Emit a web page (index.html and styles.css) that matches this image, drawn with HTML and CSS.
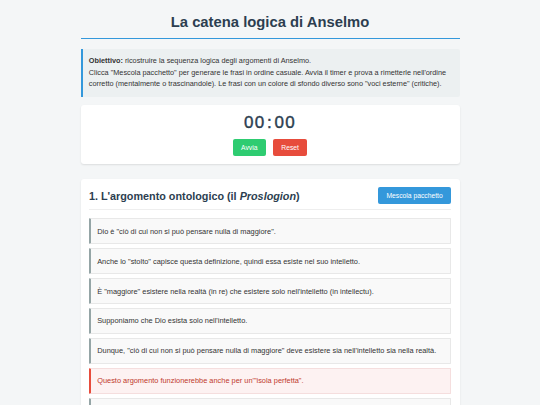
FILE: index.html
```html
<!DOCTYPE html>
<html lang="it">
<head>
<meta charset="utf-8">
<title>La catena logica di Anselmo</title>
<link rel="stylesheet" href="styles.css">
</head>
<body>
<main class="wrap">
  <h1 class="title">La catena logica di Anselmo</h1>

  <section class="intro">
    <p><strong>Obiettivo:</strong> ricostruire la sequenza logica degli argomenti di Anselmo.</p>
    <p>Clicca "Mescola pacchetto" per generare le frasi in ordine casuale. Avvia il timer e prova a rimetterle nell'ordine corretto (mentalmente o trascinandole). Le frasi con un colore di sfondo diverso sono "voci esterne" (critiche).</p>
  </section>

  <section class="card timer">
    <div class="clock">00<span class="colon">:</span>00</div>
    <div class="timer-actions">
      <button class="btn btn-green" type="button">Avvia</button>
      <button class="btn btn-red" type="button">Reset</button>
    </div>
  </section>

  <section class="card deck">
    <header class="deck-head">
      <h2>1. L'argomento ontologico (il <em>Proslogion</em>)</h2>
      <button class="btn btn-blue" type="button">Mescola pacchetto</button>
    </header>
    <ul class="steps">
      <li class="step">Dio è "ciò di cui non si può pensare nulla di maggiore".</li>
      <li class="step">Anche lo "stolto" capisce questa definizione, quindi essa esiste nel suo intelletto.</li>
      <li class="step">È "maggiore" esistere nella realtà (in re) che esistere solo nell'intelletto (in intellectu).</li>
      <li class="step">Supponiamo che Dio esista solo nell'intelletto.</li>
      <li class="step">Dunque, "ciò di cui non si può pensare nulla di maggiore" deve esistere sia nell'intelletto sia nella realtà.</li>
      <li class="step step-critic">Questo argomento funzionerebbe anche per un'"isola perfetta".</li>
      <li class="step">Ma allora potremmo pensare qualcosa di maggiore: un essere che esiste anche nella realtà.</li>
    </ul>
  </section>
</main>
</body>
</html>
```

FILE: styles.css
```css
* {
  box-sizing: border-box;
}

html, body {
  margin: 0;
  padding: 0;
}

body {
  background: #f4f6f7;
  color: #333;
  font-family: "Liberation Sans", Arial, sans-serif;
  font-size: 7.3px;
}

.wrap {
  width: 379px;
  margin: 0 auto;
  padding-top: 8px;
}

.title {
  margin: 5.6px 0 10px;
  padding-bottom: 7.5px;
  border-bottom: 1px solid #3498db;
  color: #2c3e50;
  font-size: 14.8px;
  font-weight: bold;
  text-align: center;
  line-height: 16.5px;
}

.intro {
  background: #ecf0f1;
  border-left: 2px solid #3498db;
  border-radius: 0 2px 2px 0;
  padding: 6.3px 6.3px;
  line-height: 11.8px;
  color: #333;
}

.intro p {
  margin: 0;
}

.card {
  background: #fff;
  border-radius: 3px;
  box-shadow: 0 1px 2px rgba(0, 0, 0, 0.1);
}

.timer {
  margin-top: 8px;
  padding: 8.4px;
  text-align: center;
}

.clock {
  color: #2c3e50;
  font-size: 17px;
  font-weight: normal;
  -webkit-text-stroke: 0.4px #2c3e50;
  letter-spacing: 1.3px;
  line-height: 19.5px;
  margin-bottom: 7px;
}

.clock .colon {
  padding: 0 1.5px;
}

.timer-actions {
  display: flex;
  justify-content: center;
  gap: 7px;
}

.btn {
  border: none;
  border-radius: 2px;
  color: #fff;
  font-family: inherit;
  font-size: 6.75px;
  line-height: 7.8px;
  padding: 4.2px 8.4px;
  cursor: pointer;
}

.btn-green { background: #2ecc71; }
.btn-red { background: #e74c3c; }
.btn-blue { background: #3498db; }

.deck {
  margin-top: 15px;
  padding: 8.4px;
}

.deck-head {
  display: flex;
  justify-content: space-between;
  align-items: center;
  padding-bottom: 5.5px;
  border-bottom: 1px solid #eee;
  margin-bottom: 8.4px;
}

.deck-head h2 {
  margin: 0;
  color: #2c3e50;
  font-size: 10.8px;
  line-height: 16px;
}

.steps {
  list-style: none;
  margin: 0;
  padding: 0;
  display: flex;
  flex-direction: column;
  gap: 4.2px;
}

.step {
  background: #f9f9f9;
  border: 1px solid #e8e8e8;
  border-left: 2px solid #95a5a6;
  border-radius: 1px;
  padding: 6.3px 6.3px;
  font-size: 7.4px;
  line-height: 11.1px;
  color: #333;
}

.step-critic {
  background: #fdf2f2;
  border-color: #f5dede;
  border-left-color: #e74c3c;
  color: #c0392b;
}
```
